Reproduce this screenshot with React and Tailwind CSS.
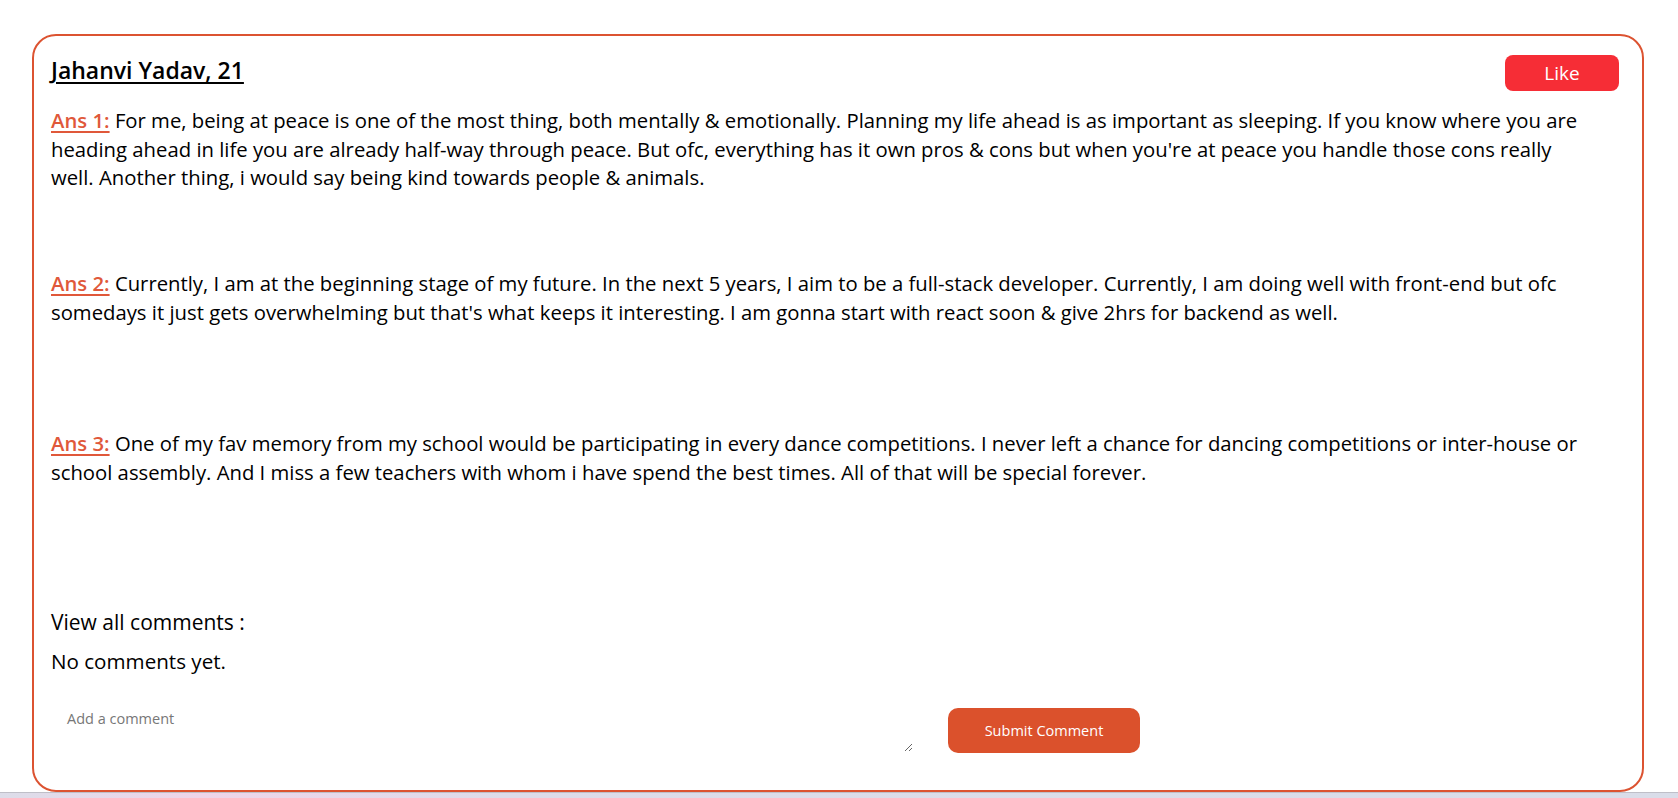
import React from "react";

const answers = [
  {
    label: "Ans 1:",
    h: "h-[163px]",
    text: "For me, being at peace is one of the most thing, both mentally & emotionally. Planning my life ahead is as important as sleeping. If you know where you are heading ahead in life you are already half-way through peace. But ofc, everything has it own pros & cons but when you're at peace you handle those cons really well. Another thing, i would say being kind towards people & animals.",
  },
  {
    label: "Ans 2:",
    h: "h-[160px]",
    text: "Currently, I am at the beginning stage of my future. In the next 5 years, I aim to be a full-stack developer. Currently, I am doing well with front-end but ofc somedays it just gets overwhelming but that's what keeps it interesting. I am gonna start with react soon & give 2hrs for backend as well.",
  },
  {
    label: "Ans 3:",
    h: "h-[161px]",
    text: "One of my fav memory from my school would be participating in every dance competitions. I never left a chance for dancing competitions or inter-house or school assembly. And I miss a few teachers with whom i have spend the best times. All of that will be special forever.",
  },
];

export default function App() {
  return (
    <div className="min-h-[798px] bg-white font-['Open_Sans',sans-serif] text-black">
      <div className="pt-[34px] pl-[32px]">
        <div className="w-[1612px] h-[758px] rounded-[24px] border-2 border-[#dc5331] pl-[17px] pr-[12px] pt-[19px] flex flex-col">
          <div className="flex items-center justify-between h-[36px]">
            <h2 className="mb-[6px] text-[23px] font-semibold underline underline-offset-[3px] decoration-[2px] leading-[30px]">
              Jahanvi Yadav, 21
            </h2>
            <button className="mr-[11px] w-[114px] h-[36px] rounded-[8px] bg-[#f62d36] text-white text-[19px] leading-[36px]">
              Like
            </button>
          </div>
          <div className="mt-[15px] pr-[40px] flex flex-col">
            {answers.map((a) => (
              <p key={a.label} className={`${a.h} text-[20.3px] leading-[28.5px]`}>
                <span className="font-semibold text-[#e0583a] underline underline-offset-[3px]">
                  {a.label}
                </span>{" "}
                {a.text}
              </p>
            ))}
          </div>
          <div className="mt-[18px] text-[21px] font-medium leading-[28px]">View all comments :</div>
          <div className="mt-[11px] text-[20.6px] leading-[28px]">No comments yet.</div>
          <div className="mt-[28px] flex items-start gap-[35px] pl-[4px]">
            <textarea
              placeholder="Add a comment"
              className="w-[858px] h-[49px] pl-[12px] pr-[10px] py-[5px] text-[14.5px] outline-none border-0 placeholder:text-[#777]"
            />
            <button className="mt-[5px] w-[192px] h-[45px] rounded-[10px] bg-[#db512c] text-white text-[14.5px]">
              Submit Comment
            </button>
          </div>
        </div>
      </div>
      <div className="h-[6px] border-t border-[#bfbfc8] bg-[linear-gradient(90deg,#dcdde9_0%,#efd5ea_12%,#dddce9_30%,#d9dde9_100%)]" />
    </div>
  );
}
